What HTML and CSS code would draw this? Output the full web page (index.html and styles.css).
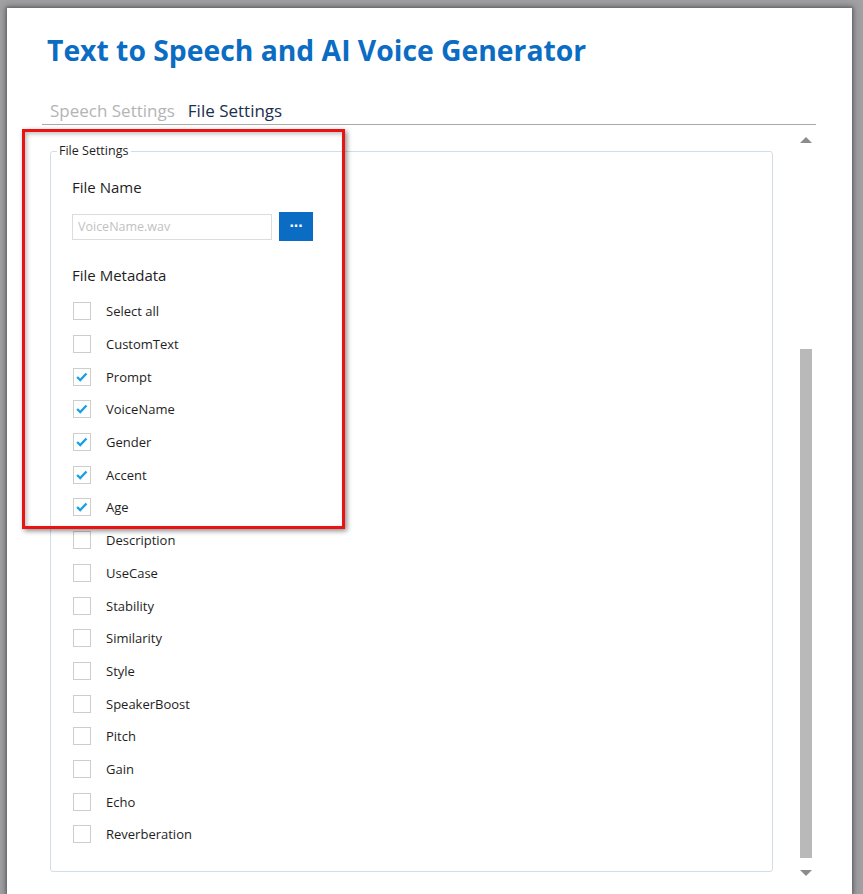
FILE: index.html
```html
<!DOCTYPE html>
<html lang="en">
<head>
<meta charset="utf-8">
<title>Text to Speech and AI Voice Generator</title>
<link rel="stylesheet" href="styles.css">
</head>
<body>
<div class="window">
  <h1 class="title">Text to Speech and AI Voice Generator</h1>
  <div class="tabs">
    <span class="tab">Speech Settings</span>
    <span class="tab active">File Settings</span>
  </div>
  <div class="main">
    <fieldset class="group">
      <legend class="legend">File Settings</legend>
      <div class="section-label">File Name</div>
      <div class="file-row">
        <input class="file-input" type="text" placeholder="VoiceName.wav">
        <button class="browse">&middot;&middot;&middot;</button>
      </div>
      <div class="section-label meta">File Metadata</div>
      <ul class="checks">
        <li class="check"><span class="box"></span><span class="lbl">Select all</span></li>
        <li class="check"><span class="box"></span><span class="lbl">CustomText</span></li>
        <li class="check"><span class="box on"><svg viewBox="0 0 18 18"><polyline points="3.5,9 7,12.5 14,5"/></svg></span><span class="lbl">Prompt</span></li>
        <li class="check"><span class="box on"><svg viewBox="0 0 18 18"><polyline points="3.5,9 7,12.5 14,5"/></svg></span><span class="lbl">VoiceName</span></li>
        <li class="check"><span class="box on"><svg viewBox="0 0 18 18"><polyline points="3.5,9 7,12.5 14,5"/></svg></span><span class="lbl">Gender</span></li>
        <li class="check"><span class="box on"><svg viewBox="0 0 18 18"><polyline points="3.5,9 7,12.5 14,5"/></svg></span><span class="lbl">Accent</span></li>
        <li class="check"><span class="box on"><svg viewBox="0 0 18 18"><polyline points="3.5,9 7,12.5 14,5"/></svg></span><span class="lbl">Age</span></li>
        <li class="check"><span class="box"></span><span class="lbl">Description</span></li>
        <li class="check"><span class="box"></span><span class="lbl">UseCase</span></li>
        <li class="check"><span class="box"></span><span class="lbl">Stability</span></li>
        <li class="check"><span class="box"></span><span class="lbl">Similarity</span></li>
        <li class="check"><span class="box"></span><span class="lbl">Style</span></li>
        <li class="check"><span class="box"></span><span class="lbl">SpeakerBoost</span></li>
        <li class="check"><span class="box"></span><span class="lbl">Pitch</span></li>
        <li class="check"><span class="box"></span><span class="lbl">Gain</span></li>
        <li class="check"><span class="box"></span><span class="lbl">Echo</span></li>
        <li class="check"><span class="box"></span><span class="lbl">Reverberation</span></li>
      </ul>
    </fieldset>
    <div class="scrollbar">
      <span class="arrow up"></span>
      <span class="track"><span class="thumb"></span></span>
      <span class="arrow down"></span>
    </div>
  </div>
  <div class="highlight"></div>
</div>
</body>
</html>
```

FILE: styles.css
```css
html, body {
  margin: 0;
  padding: 0;
}
body {
  background: #a2a2a4;
  width: 863px;
  height: 894px;
  overflow: hidden;
  font-family: "Open Sans", "Noto Sans", sans-serif;
  color: #1e1e1e;
}
.window {
  position: relative;
  margin: 8px 0 0 7px;
  width: 845px;
  height: 886px;
  background: #ffffff;
  box-shadow: 0 0 3px 1px rgba(60, 60, 70, 0.55), 0 0 8px 2px rgba(60, 60, 70, 0.35);
}
.title {
  margin: 0;
  padding: 25px 0 0 40px;
  font-size: 28.3px;
  line-height: 34px;
  font-weight: 700;
  color: #0b6cc3;
}
.tabs {
  display: flex;
  gap: 13px;
  margin: 32px 0 0 35px;
  width: 766px;
  padding-left: 8px;
  border-bottom: 1px solid #a9a9a9;
  font-size: 17px;
  line-height: 24px;
  padding-bottom: 1px;
}
.tab {
  color: #b4b4b4;
}
.tab.active {
  color: #1b2f4e;
}
.main {
  display: flex;
  align-items: flex-start;
}
.group {
  margin: 18px 0 0 43px;
  width: 723px;
  height: 729px;
  box-sizing: border-box;
  padding: 0 0 0 21px;
  border: 1px solid #d3dde7;
  border-radius: 3px;
}
.legend {
  font-size: 12.5px;
  line-height: 16px;
  padding: 0 3px 0 2px;
  margin-left: -15px;
  color: #1e1e1e;
}
.section-label {
  font-size: 15px;
  line-height: 20px;
  margin-top: 18px;
  color: #1e1e1e;
}
.section-label.meta {
  margin-top: 24px;
}
.file-row {
  display: flex;
  align-items: center;
  gap: 7px;
  margin-top: 15px;
}
.file-input {
  width: 200px;
  height: 26px;
  box-sizing: border-box;
  border: 1px solid #dcdcdc;
  padding: 0 5px;
  font-family: inherit;
  font-size: 12.5px;
  color: #333;
  outline: none;
}
.file-input::placeholder {
  color: #c2c2c2;
}
.browse {
  width: 34px;
  height: 29px;
  border: none;
  background: #0b6cc3;
  color: #ffffff;
  font-size: 16px;
  font-weight: 700;
  line-height: 1;
  padding: 0 0 2px;
  letter-spacing: -1px;
}
.checks {
  list-style: none;
  margin: 10px 0 0;
  padding: 0;
}
.check {
  display: flex;
  align-items: center;
  height: 32.7px;
}
.box {
  width: 18px;
  height: 18px;
  box-sizing: border-box;
  border: 1px solid #cdcdcd;
  background: #fff;
  margin-left: 1px;
}
.box svg {
  display: block;
  width: 16px;
  height: 16px;
  fill: none;
  stroke: #18a0e6;
  stroke-width: 2.6;
  stroke-linecap: butt;
}
.lbl {
  margin-left: 15px;
  font-size: 13px;
  color: #1e1e1e;
}
.scrollbar {
  display: flex;
  flex-direction: column;
  align-items: center;
  width: 14px;
  height: 739px;
  margin: 12px 0 0 26px;
}
.arrow {
  width: 0;
  height: 0;
  border-left: 6px solid transparent;
  border-right: 6px solid transparent;
}
.arrow.up {
  border-bottom: 6px solid #8c8c8c;
}
.arrow.down {
  border-top: 6px solid #8c8c8c;
}
.track {
  flex: 1;
  width: 12px;
  display: flex;
  flex-direction: column;
  justify-content: flex-end;
  padding: 0 0 12px;
}
.thumb {
  display: block;
  width: 12px;
  height: 509px;
  background: #b9b9b9;
}
.highlight {
  position: absolute;
  left: 15px;
  top: 121px;
  width: 317px;
  height: 394px;
  border: 3px solid #e81414;
  box-shadow: 2px 2px 5px rgba(0, 0, 0, 0.45), inset 2px 2px 4px rgba(0, 0, 0, 0.25);
  pointer-events: none;
}
```
